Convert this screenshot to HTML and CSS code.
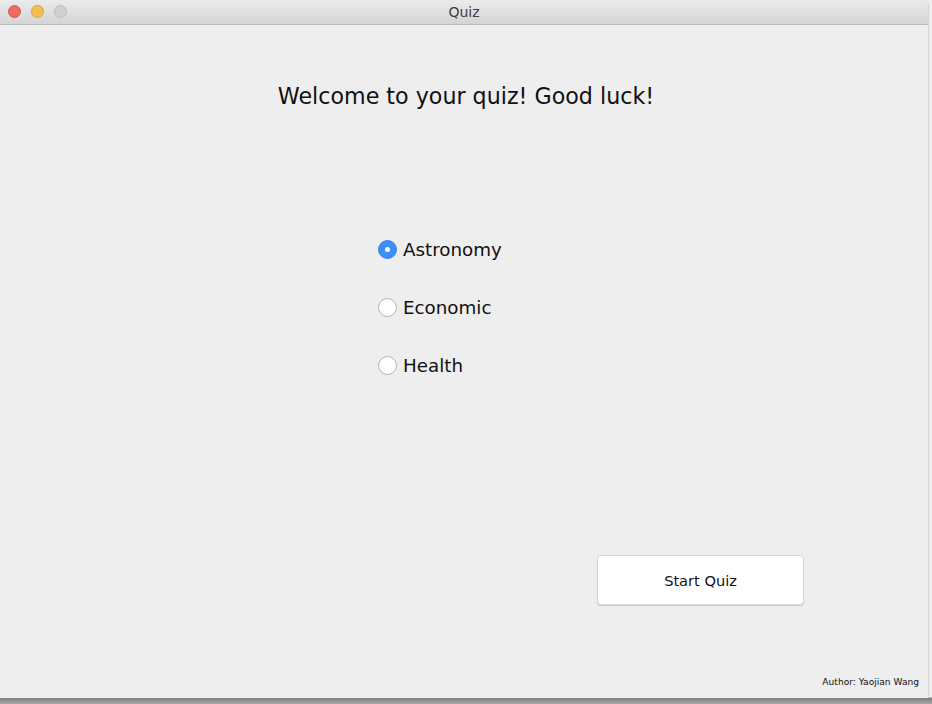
FILE: index.html
```html
<!DOCTYPE html>
<html>
<head>
<meta charset="utf-8">
<title>Quiz</title>
<link rel="stylesheet" href="styles.css">
</head>
<body>
<div class="window">
  <div class="titlebar">
    <div class="lights">
      <span class="light red"></span>
      <span class="light yellow"></span>
      <span class="light gray"></span>
    </div>
    <div class="title">Quiz</div>
  </div>
  <div class="content">
    <h1 class="heading">Welcome to your quiz! Good luck!</h1>
    <div class="options">
      <label class="option"><span class="radio checked"></span><span class="opt-text">Astronomy</span></label>
      <label class="option"><span class="radio"></span><span class="opt-text">Economic</span></label>
      <label class="option"><span class="radio"></span><span class="opt-text">Health</span></label>
    </div>
    <div class="actions">
      <button class="start">Start Quiz</button>
    </div>
    <div class="author">Author: Yaojian Wang</div>
  </div>
</div>
</body>
</html>
```

FILE: styles.css
```css
html, body {
  margin: 0;
  padding: 0;
}
body {
  width: 932px;
  height: 704px;
  background: linear-gradient(to bottom, #ededed 0, #ededed 697px, #7e7e7e 698px, #a6a6a6 704px);
  font-family: "DejaVu Sans", "Liberation Sans", sans-serif;
  overflow: hidden;
}
.window {
  width: 929px;
  height: 698px;
  background: #eeeeee;
  border-right: 1px solid #d8d8d8;
  box-sizing: border-box;
  display: flex;
  flex-direction: column;
  border-top-left-radius: 5px;
  border-top-right-radius: 5px;
  overflow: hidden;
}
.titlebar {
  height: 25px;
  flex: none;
  box-sizing: border-box;
  background: linear-gradient(to bottom, #ebebeb, #d4d4d4);
  border-bottom: 1px solid #b9b9b9;
  position: relative;
  display: flex;
  align-items: center;
  justify-content: center;
}
.lights {
  position: absolute;
  left: 8px;
  top: 5px;
  display: flex;
  gap: 10px;
}
.light {
  width: 13px;
  height: 13px;
  border-radius: 50%;
  box-sizing: border-box;
}
.red { background: #ee6a5f; border: 1px solid #d8574d; }
.yellow { background: #f5be4f; border: 1px solid #d9a23c; }
.gray { background: #d0d0d0; border: 1px solid #bdbdbd; }
.title {
  font-size: 14px;
  color: #404040;
  line-height: 24px;
}
.content {
  flex: 1;
  display: flex;
  flex-direction: column;
}
.heading {
  margin: 56px 0 0 0;
  font-weight: normal;
  font-size: 22.2px;
  line-height: 30px;
  height: 30px;
  text-align: center;
  color: #111;
  padding-left: 4px;
}
.options {
  margin: 126px 0 0 378px;
  display: flex;
  flex-direction: column;
  gap: 34px;
}
.option {
  display: flex;
  align-items: center;
  height: 24px;
  gap: 6px;
}
.radio {
  width: 19px;
  height: 19px;
  border-radius: 50%;
  box-sizing: border-box;
  background: #fff;
  border: 1px solid #b5b5b5;
  position: relative;
  flex: none;
}
.radio.checked {
  background: #3b8ff7;
  border-color: #3683e8;
}
.radio.checked::after {
  content: "";
  position: absolute;
  left: 6px;
  top: 6px;
  width: 5px;
  height: 5px;
  border-radius: 50%;
  background: #fff;
}
.opt-text {
  font-size: 18.3px;
  color: #111;
}
.actions {
  margin: 178px 0 0 597px;
}
.start {
  width: 207px;
  height: 50px;
  background: #fff;
  border: 1px solid #d6d6d6;
  border-radius: 4px;
  box-shadow: 0 1px 1px rgba(0,0,0,0.15);
  font-family: "DejaVu Sans", "Liberation Sans", sans-serif;
  font-size: 14.6px;
  color: #111;
  padding: 0;
}
.author {
  margin-top: auto;
  align-self: flex-end;
  padding: 0 9px 11px 0;
  font-size: 9.1px;
  color: #111;
}
```
